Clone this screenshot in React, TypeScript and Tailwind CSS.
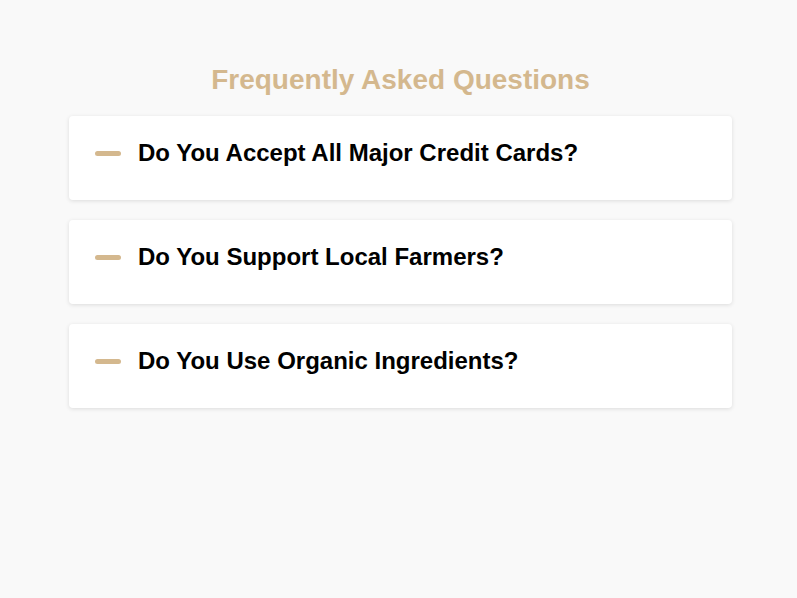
const faqs = [
  "Do You Accept All Major Credit Cards?",
  "Do You Support Local Farmers?",
  "Do You Use Organic Ingredients?",
];

export default function App() {
  return (
    <main className="min-h-[598px] bg-[#f9f9f9] font-['Liberation_Sans',Arial,sans-serif]">
      <section className="ml-[69px] w-[663px] pt-[62px]">
        <h2 className="text-center text-[28px] font-bold leading-[36px] text-[#d4b88e]">
          Frequently Asked Questions
        </h2>
        <div className="mt-[18px] flex flex-col gap-[20px]">
          {faqs.map((q) => (
            <div
              key={q}
              className="flex h-[84px] items-start rounded-[4px] bg-white px-[26px] pt-[23px] shadow-[0_1px_4px_rgba(0,0,0,0.12)]"
            >
              <span className="mt-[12px] h-[5px] w-[26px] shrink-0 rounded-full bg-[#d4b88e]" />
              <h3 className="ml-[17px] text-[24px] font-bold leading-[28px] text-black">
                {q}
              </h3>
            </div>
          ))}
        </div>
      </section>
    </main>
  );
}
